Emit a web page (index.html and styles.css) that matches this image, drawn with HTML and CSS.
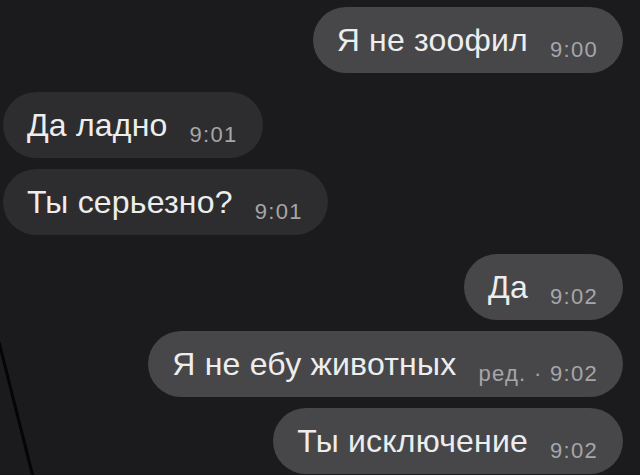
FILE: index.html
```html
<!DOCTYPE html>
<html lang="ru">
<head>
<meta charset="utf-8">
<link rel="stylesheet" href="styles.css">
</head>
<body>
<div class="chat">
  <div class="bubble out"><span class="txt">Я не зоофил</span><span class="time">9:00</span></div>
  <div class="bubble in first"><span class="txt">Да ладно</span><span class="time">9:01</span></div>
  <div class="bubble in"><span class="txt">Ты серьезно?</span><span class="time">9:01</span></div>
  <div class="bubble out first"><span class="txt">Да</span><span class="time">9:02</span></div>
  <div class="bubble out"><span class="txt">Я не ебу животных</span><span class="time">ред. · 9:02</span></div>
  <div class="bubble out"><span class="txt">Ты исключение</span><span class="time">9:02</span></div>
</div>
<svg class="crack" width="40" height="140" viewBox="0 0 40 140"><line x1="-1" y1="0" x2="33" y2="135" stroke="#050505" stroke-width="3"/></svg>
</body>
</html>
```
FILE: styles.css
```css
html, body {
  margin: 0;
  padding: 0;
  background: #1b1a1d;
  width: 640px;
  height: 475px;
  overflow: hidden;
}
body {
  position: relative;
  font-family: "Liberation Sans", Arial, sans-serif;
}
.chat {
  display: flex;
  flex-direction: column;
  padding-top: 7px;
  gap: 11px;
}
.bubble {
  box-sizing: border-box;
  height: 66px;
  line-height: 66px;
  padding: 0 25px 0 24px;
  border-radius: 33px;
  white-space: nowrap;
  color: #ededee;
}
.bubble.first { margin-top: 8px; }
.out {
  align-self: flex-end;
  margin-right: 17px;
  background: #47474a;
}
.in {
  align-self: flex-start;
  margin-left: 3px;
  background: #2d2d30;
}
.txt {
  font-size: 32px;
  letter-spacing: 0.2px;
}
.time {
  font-size: 22px;
  letter-spacing: 1.3px;
  color: #a6a6a9;
  margin-left: 22px;
  vertical-align: -6px;
}
.crack {
  position: absolute;
  left: 0;
  top: 342px;
}
```
